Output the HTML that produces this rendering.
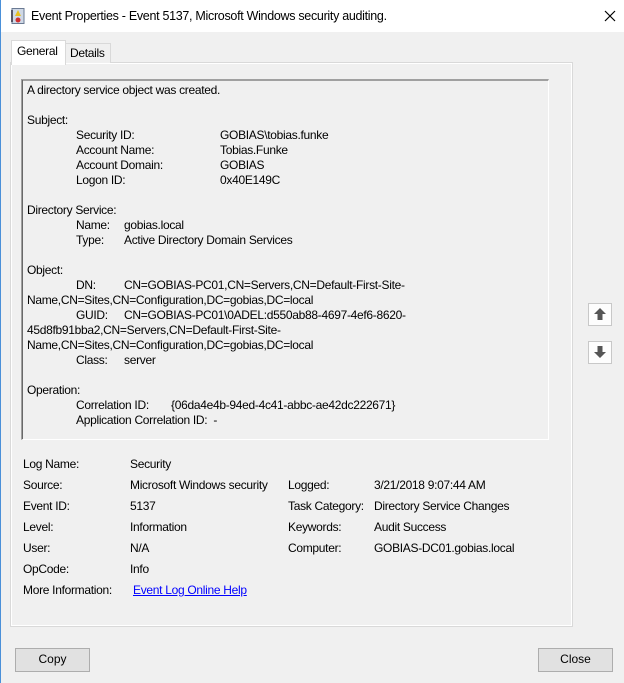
<!DOCTYPE html>
<html><head><style>
*{margin:0;padding:0;box-sizing:border-box}
body{width:624px;height:683px;background:#f0f0f0;font-family:"Liberation Sans",sans-serif;font-size:12px;color:#000;position:relative;overflow:hidden}
.a{position:absolute;white-space:nowrap;letter-spacing:-0.3px}
.btn{position:absolute;border:1px solid #adadad;background:#e1e1e1;text-align:center;line-height:21px;font-size:12px}
</style></head><body>
<div style="position:absolute;left:0;top:0;width:624px;height:32px;background:#fff"></div>
<div style="position:absolute;left:0;top:0;width:1px;height:683px;background:#4a90d9"></div>
<svg style="position:absolute;left:11px;top:8px" width="14" height="16"><rect x="1" y="0.5" width="12" height="15" fill="#cfd8e6" stroke="#6a7a93"/><rect x="0" y="2" width="2" height="12" fill="#556"/><path d="M7 2 L10 8 L4 8Z" fill="#e8c020"/><circle cx="7" cy="12" r="2.5" fill="#d03030"/></svg>
<div class="a" style="left:31px;top:9px;font-size:12.5px">Event Properties - Event 5137, Microsoft Windows security auditing.</div>
<svg style="position:absolute;left:604px;top:10px" width="12" height="12"><path d="M1 1L11 11M11 1L1 11" stroke="#000" stroke-width="1.2"/></svg>

<div style="position:absolute;left:10px;top:62px;width:563px;height:565px;border:1px solid #d9d9d9;background:#f0f0f0"></div>
<div style="position:absolute;left:11px;top:63px;width:561px;height:563px;border:1px solid #fff"></div>
<div style="position:absolute;left:65px;top:43px;width:46px;height:20px;border:1px solid #d9d9d9;border-bottom:none;background:#f0f0f0"></div>
<div class="a" style="left:70px;top:46px">Details</div>
<div style="position:absolute;left:11px;top:40px;width:55px;height:25px;border:1px solid #d9d9d9;border-bottom:none;background:#fff"></div>
<div class="a" style="left:17px;top:44px">General</div>

<div style="position:absolute;left:21px;top:79px;width:528px;height:361px;border:1px solid #fff;border-top:2px solid #a0a0a0;border-left:2px solid #a0a0a0;background:#f0f0f0"></div>
<div style="position:absolute;left:22px;top:80px;width:1px;height:359px;background:#696969"></div>

<div class="a" style="left:27px;top:83px">A directory service object was created.</div>
<div class="a" style="left:27px;top:113px">Subject:</div>
<div class="a" style="left:76px;top:128px">Security ID:</div><div class="a" style="left:220px;top:128px">GOBIAS\tobias.funke</div>
<div class="a" style="left:76px;top:143px">Account Name:</div><div class="a" style="left:220px;top:143px">Tobias.Funke</div>
<div class="a" style="left:76px;top:158px">Account Domain:</div><div class="a" style="left:220px;top:158px">GOBIAS</div>
<div class="a" style="left:76px;top:173px">Logon ID:</div><div class="a" style="left:220px;top:173px">0x40E149C</div>
<div class="a" style="left:27px;top:203px">Directory Service:</div>
<div class="a" style="left:76px;top:218px">Name:</div><div class="a" style="left:124px;top:218px">gobias.local</div>
<div class="a" style="left:76px;top:233px">Type:</div><div class="a" style="left:124px;top:233px">Active Directory Domain Services</div>
<div class="a" style="left:27px;top:263px">Object:</div>
<div class="a" style="left:76px;top:278px">DN:</div><div class="a" style="left:124px;top:278px">CN=GOBIAS-PC01,CN=Servers,CN=Default-First-Site-</div>
<div class="a" style="left:27px;top:293px">Name,CN=Sites,CN=Configuration,DC=gobias,DC=local</div>
<div class="a" style="left:76px;top:308px">GUID:</div><div class="a" style="left:124px;top:308px">CN=GOBIAS-PC01\0ADEL:d550ab88-4697-4ef6-8620-</div>
<div class="a" style="left:27px;top:323px">45d8fb91bba2,CN=Servers,CN=Default-First-Site-</div>
<div class="a" style="left:27px;top:338px">Name,CN=Sites,CN=Configuration,DC=gobias,DC=local</div>
<div class="a" style="left:76px;top:353px">Class:</div><div class="a" style="left:124px;top:353px">server</div>
<div class="a" style="left:27px;top:383px">Operation:</div>
<div class="a" style="left:76px;top:398px">Correlation ID:</div><div class="a" style="left:171px;top:398px">{06da4e4b-94ed-4c41-abbc-ae42dc222671}</div>
<div class="a" style="left:76px;top:413px">Application Correlation ID:&nbsp; -</div>

<div class="a" style="left:23px;top:457px">Log Name:</div><div class="a" style="left:130px;top:457px">Security</div>
<div class="a" style="left:23px;top:478px">Source:</div><div class="a" style="left:130px;top:478px">Microsoft Windows security</div>
<div class="a" style="left:288px;top:478px">Logged:</div><div class="a" style="left:374px;top:478px">3/21/2018 9:07:44 AM</div>
<div class="a" style="left:23px;top:499px">Event ID:</div><div class="a" style="left:130px;top:499px">5137</div>
<div class="a" style="left:288px;top:499px">Task Category:</div><div class="a" style="left:374px;top:499px">Directory Service Changes</div>
<div class="a" style="left:23px;top:520px">Level:</div><div class="a" style="left:130px;top:520px">Information</div>
<div class="a" style="left:288px;top:520px">Keywords:</div><div class="a" style="left:374px;top:520px">Audit Success</div>
<div class="a" style="left:23px;top:541px">User:</div><div class="a" style="left:130px;top:541px">N/A</div>
<div class="a" style="left:288px;top:541px">Computer:</div><div class="a" style="left:374px;top:541px">GOBIAS-DC01.gobias.local</div>
<div class="a" style="left:23px;top:562px">OpCode:</div><div class="a" style="left:130px;top:562px">Info</div>
<div class="a" style="left:23px;top:583px">More Information:</div><div class="a" style="left:133px;top:583px;color:#0000ff;text-decoration:underline">Event Log Online Help</div>

<div style="position:absolute;left:588px;top:303px;width:24px;height:23px;border:1px solid #c8c8c8;background:#fdfdfd"></div>
<svg style="position:absolute;left:593px;top:307px" width="14" height="14"><path d="M7 1L13 7H9.5V13H4.5V7H1Z" fill="#555"/></svg>
<div style="position:absolute;left:588px;top:341px;width:24px;height:23px;border:1px solid #c8c8c8;background:#fdfdfd"></div>
<svg style="position:absolute;left:593px;top:345px" width="14" height="14"><path d="M7 13L13 7H9.5V1H4.5V7H1Z" fill="#555"/></svg>

<div class="btn" style="left:15px;top:648px;width:75px;height:24px">Copy</div>
<div class="btn" style="left:538px;top:648px;width:75px;height:24px">Close</div>
</body></html>
